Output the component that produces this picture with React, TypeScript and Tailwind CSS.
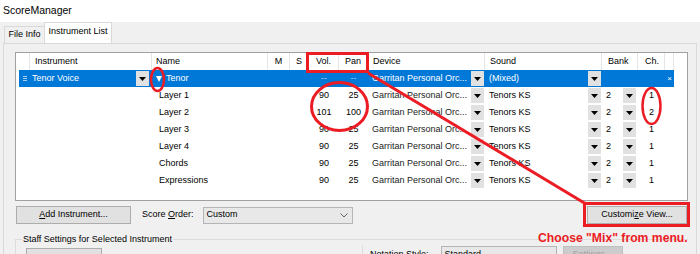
import React from 'react';

interface Layer {
    name: string;
    vol: string;
    pan: string;
    ch: string;
}

const layers: Layer[] = [
    { name: 'Layer 1', vol: '90', pan: '25', ch: '1' },
    { name: 'Layer 2', vol: '101', pan: '100', ch: '2' },
    { name: 'Layer 3', vol: '90', pan: '25', ch: '1' },
    { name: 'Layer 4', vol: '90', pan: '25', ch: '1' },
    { name: 'Chords', vol: '90', pan: '25', ch: '1' },
    { name: 'Expressions', vol: '90', pan: '25', ch: '1' },
];

const DropButton = ({ className = '' }: { className?: string }) => (
    <div className={`w-[13px] h-[15px] shrink-0 bg-[#e1e1e1] flex items-center justify-center pt-[1px] ${className}`}>
        <svg width="7" height="4" viewBox="0 0 7 4">
            <path d="M0 0H7L3.5 4Z" fill="#000" />
        </svg>
    </div>
);

const Chevron = () => (
    <svg width="8" height="5" viewBox="0 0 8 5">
        <polyline points="0.5,0.5 4,4 7.5,0.5" fill="none" stroke="#606060" strokeWidth="1" />
    </svg>
);

const App = () => {
    return (
        <div className="relative w-[700px] h-[254px] overflow-hidden bg-[#f0f0f0] text-[9px] text-black font-['Liberation_Sans',Arial,sans-serif]">
            {/* title */}
            <div className="h-[22px] bg-white flex items-center pl-[3px] text-[10.5px]">ScoreManager</div>

            {/* tabs */}
            <div className="h-[21px] flex items-end pl-[4px]">
                <div className="h-[17px] w-[40px] border-t border-l border-[#d9d9d9] flex items-center justify-center">File Info</div>
                <div className="h-[21px] w-[68px] bg-white border-t border-x border-[#d9d9d9] flex items-center justify-center pb-[2px]">Instrument List</div>
            </div>

            {/* tab page */}
            <div className="ml-[3px] w-[694px] h-[220px] border border-[#d9d9d9] pt-[8px] pl-[11px]">
                {/* list */}
                <div className="w-[673px] h-[149px] border border-[#a0a0a0] bg-white overflow-hidden">
                    <div className="flex h-[17px]">
                        <div className="w-[14px] border-r border-[#e5e5e5]" />
                        <div className="w-[122px] border-r border-[#e5e5e5] flex items-center pl-[5px]">Instrument</div>
                        <div className="w-[116px] border-r border-[#e5e5e5] flex items-center pl-[4px]">Name</div>
                        <div className="w-[22px] border-r border-[#e5e5e5] flex items-center justify-center">M</div>
                        <div className="w-[19px] border-r border-[#e5e5e5] flex items-center justify-center">S</div>
                        <div className="w-[30px] border-r border-[#e5e5e5] flex items-center justify-center">Vol.</div>
                        <div className="w-[29px] border-r border-[#e5e5e5] flex items-center justify-center">Pan</div>
                        <div className="w-[117px] border-r border-[#e5e5e5] flex items-center pl-[5px]">Device</div>
                        <div className="w-[117px] border-r border-[#e5e5e5] flex items-center pl-[5px]">Sound</div>
                        <div className="w-[36px] border-r border-[#e5e5e5] flex items-center pl-[6px]">Bank</div>
                        <div className="w-[27px] border-r border-[#e5e5e5] flex items-center pl-[7px]">Ch.</div>
                        <div className="w-[9px] border-r border-[#e5e5e5]" />
                    </div>

                    {/* selected instrument row */}
                    <div className="flex h-[17px]">
                        <div className="w-[3px]" />
                        <div className="flex w-[655px] bg-[#0078d7] text-white">
                            <div className="w-[11px] flex items-center pl-[4px]">
                                <svg width="4" height="5" viewBox="0 0 4 5">
                                    <rect x="0" y="0" width="4" height="1" fill="#a8cdf0" />
                                    <rect x="0" y="2" width="4" height="1" fill="#a8cdf0" />
                                    <rect x="0" y="4" width="4" height="1" fill="#a8cdf0" />
                                </svg>
                            </div>
                            <div className="w-[122px] flex items-center pl-[2px] pr-[3px]">
                                <span className="flex-1">Tenor Voice</span>
                                <DropButton />
                            </div>
                            <div className="w-[116px] flex items-center pl-[4px] gap-[4px]">
                                <svg width="6" height="6" viewBox="0 0 6 6">
                                    <path d="M0 0H6L3 6Z" fill="#fff" />
                                </svg>
                                <span>Tenor</span>
                            </div>
                            <div className="w-[22px]" />
                            <div className="w-[19px]" />
                            <div className="w-[30px] flex items-center justify-center text-[#a8cdf0]">--</div>
                            <div className="w-[29px] flex items-center justify-center text-[#a8cdf0]">--</div>
                            <div className="w-[117px] flex items-center pl-[4px] pr-[1px]">
                                <span className="flex-1">Garritan Personal Orc...</span>
                                <DropButton />
                            </div>
                            <div className="w-[117px] flex items-center pl-[4px] pr-[1px]">
                                <span className="flex-1">(Mixed)</span>
                                <DropButton />
                            </div>
                            <div className="w-[36px]" />
                            <div className="w-[27px]" />
                            <div className="w-[9px] flex items-center justify-center text-[8px] leading-none">×</div>
                        </div>
                    </div>

                    {layers.map(layer => (
                        <div key={layer.name} className="flex h-[17px]">
                            <div className="w-[3px]" />
                            <div className="flex w-[655px]">
                                <div className="w-[11px]" />
                                <div className="w-[122px]" />
                                <div className="w-[116px] flex items-center pl-[7px]">{layer.name}</div>
                                <div className="w-[22px]" />
                                <div className="w-[19px]" />
                                <div className="w-[30px] flex items-center justify-center">{layer.vol}</div>
                                <div className="w-[29px] flex items-center justify-center">{layer.pan}</div>
                                <div className="w-[117px] flex items-center pl-[4px] pr-[1px]">
                                    <span className="flex-1 text-[#222]">Garritan Personal Orc...</span>
                                    <DropButton />
                                </div>
                                <div className="w-[117px] flex items-center pl-[4px] pr-[1px]">
                                    <span className="flex-1">Tenors KS</span>
                                    <DropButton />
                                </div>
                                <div className="w-[36px] flex items-center pl-[4px] pr-[2px]">
                                    <span className="flex-1">2</span>
                                    <DropButton />
                                </div>
                                <div className="w-[27px] flex items-center justify-center">{layer.ch}</div>
                                <div className="w-[9px]" />
                            </div>
                        </div>
                    ))}
                </div>

                {/* buttons row */}
                <div className="w-[673px] mt-[5px] flex items-center">
                    <button className="ml-[1px] w-[115px] h-[18px] bg-[#e1e1e1] border border-[#adadad] flex items-center justify-center">
                        <span><span className="underline">A</span>dd Instrument...</span>
                    </button>
                    <span className="ml-[11px]">Score <span className="underline">O</span>rder:</span>
                    <div className="ml-[9px] w-[150px] h-[17px] bg-[#e8e8e8] border border-[#b5b5b5] flex items-center pl-[3px] pr-[4px]">
                        <span className="flex-1">Custom</span>
                        <Chevron />
                    </div>
                    <button className="ml-auto mr-[1px] w-[100px] h-[18px] bg-[#e1e1e1] border border-[#adadad] flex items-center justify-center">
                        <span>Customi<span className="underline">z</span>e View...</span>
                    </button>
                </div>

                {/* staff settings group */}
                <div className="w-[673px] mt-[10px]">
                    <div className="flex items-start h-[11px]">
                        <div className="mt-[5px] w-[7px] h-[6px] border-t border-l border-[#dcdcdc]" />
                        <span className="leading-[11px] px-[1px]">Staff Settings for Selected Instrument</span>
                        <div className="mt-[5px] flex-1 border-t border-[#dcdcdc]" />
                    </div>
                    <div className="flex h-[30px] border-l border-[#dcdcdc]">
                        <div className="w-[346px] pl-[10px] pt-[3px]">
                            <div className="w-[76px] h-[20px] bg-[#e1e1e1] border border-[#adadad]" />
                        </div>
                        <div className="flex items-start border-l border-[#dcdcdc] pl-[7px] pt-[1px]">
                            <span className="mt-[2px]">Notation Style:</span>
                            <div className="ml-[12px] w-[116px] h-[20px] bg-[#e8e8e8] border border-[#b5b5b5] flex items-start pl-[3px] pr-[4px] pt-[1px]">
                                <span className="flex-1">Standard</span>
                            </div>
                            <div className="ml-[6px] w-[60px] h-[20px] bg-[#cccccc] border border-[#bfbfbf] flex justify-center pt-[1px] text-[#a0a0a0]">Settings...</div>
                        </div>
                    </div>
                </div>
            </div>

            {/* red annotations */}
            <svg className="absolute top-0 left-0 pointer-events-none" width="700" height="254" viewBox="0 0 700 254">
                <g fill="none" stroke="#ec1c24">
                    <rect x="307.5" y="53.5" width="60" height="18" strokeWidth="3" />
                    <ellipse cx="157.5" cy="79.5" rx="6.5" ry="11.5" strokeWidth="2.5" />
                    <ellipse cx="339.5" cy="106.5" rx="28" ry="24" strokeWidth="3" />
                    <ellipse cx="651.5" cy="106" rx="9" ry="18" strokeWidth="2.5" />
                    <line x1="368" y1="73" x2="586" y2="204" strokeWidth="3" />
                    <rect x="584.5" y="203.5" width="104" height="22" strokeWidth="3" />
                </g>
            </svg>
            <div className="absolute left-[538px] top-[232px] leading-none text-[12.2px] font-bold text-[#ec1c24]">
                Choose "Mix" from menu.
            </div>
        </div>
    );
};

export default App;
